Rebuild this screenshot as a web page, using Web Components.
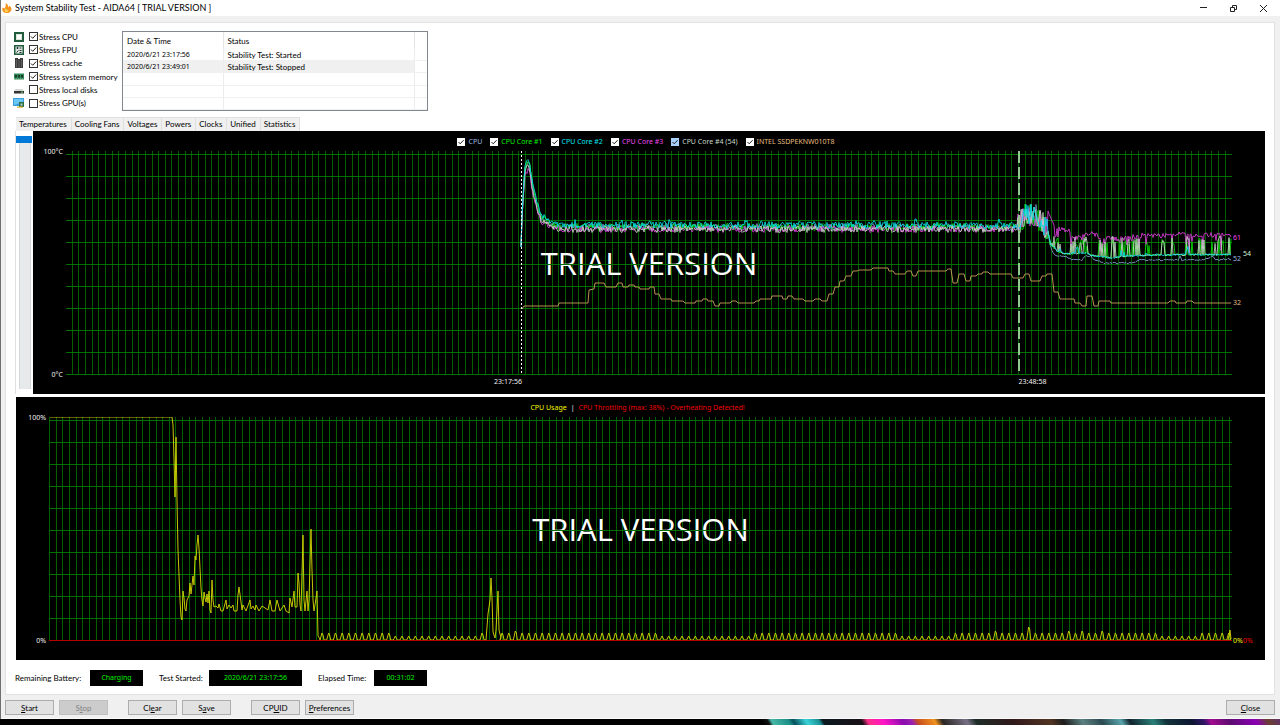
<!DOCTYPE html>
<html lang="en">
<head>
<meta charset="utf-8">
<title>System Stability Test - AIDA64</title>
<style>
html, body { margin: 0; min-height: 100%; background: #050505; }
body { font: 8px/12px Lato, "Noto Sans", sans-serif; color: #000; }
</style>
</head>
<body>
<stability-app></stability-app>

<script>
const define = (name, html, setup) => {
  const tpl = document.createElement('template');
  tpl.innerHTML = html;
  customElements.define(name, class extends HTMLElement {
    constructor() {
      super();
      this.attachShadow({ mode: 'open' }).append(tpl.content.cloneNode(true));
    }
    connectedCallback() { if (setup) setup(this, this.shadowRoot); }
  });
};

/* ---------- small controls ---------- */
define('push-button', `
<style>
:host { display: block; width: 49px; }
button { box-sizing: border-box; width: 100%; height: 15px; padding: 0; font: inherit; line-height: 12px;
  color: #000; background: #e1e1e1; border: 1px solid #adadad; white-space: nowrap; display: block; }
button:disabled { background: #ccc; border-color: #bfbfbf; color: #838383; }
</style>
<button type="button"><slot></slot></button>`, (el, root) => {
  root.querySelector('button').disabled = el.hasAttribute('disabled');
});

define('stress-option', `
<style>
:host { display: block; }
label { display: grid; grid-template-columns: 16px 9px auto; align-items: center; height: 100%; white-space: nowrap; }
::slotted(svg) { display: block; width: 12px; height: 12px; }
input { appearance: none; margin: 0; width: 9px; height: 9px; box-sizing: border-box; border: 1px solid #333; background: #fff; }
input:checked { background: #fff url("data:image/svg+xml,%3Csvg xmlns='http://www.w3.org/2000/svg' viewBox='0 0 7 7'%3E%3Cpath d='M1 3.5 2.7 5.3 6.2 1.5' fill='none' stroke='%23222'/%3E%3C/svg%3E"); }
span { padding-left: 1px; }
</style>
<label><slot name="icon"></slot><input type="checkbox"><span><slot></slot></span></label>`, (el, root) => {
  root.querySelector('input').checked = el.hasAttribute('checked');
});

define('legend-item', `
<style>
:host { display: block; white-space: nowrap; }
label { display: flex; align-items: center; gap: 3px; }
input { appearance: none; margin: 0; width: 8px; height: 8px; background: var(--box, #fff)
  url("data:image/svg+xml,%3Csvg xmlns='http://www.w3.org/2000/svg' viewBox='0 0 8 8'%3E%3Cpath d='M1.5 4 3.2 5.8 6.6 2.2' fill='none' stroke='%23222'/%3E%3C/svg%3E"); }
</style>
<label><input type="checkbox" checked><span><slot></slot></span></label>`);

define('read-out', `
<style>
:host { display: flex; align-items: center; }
label { white-space: nowrap; width: var(--label); }
output { display: block; width: var(--box); font: 7px/16px "Noto Sans", sans-serif; text-align: center; background: #000; color: #00f000; }
</style>
<label for="o"><slot name="label"></slot></label><output id="o"><slot></slot></output>`);

/* ---------- title bar ---------- */
define('title-bar', `
<style>
:host { display: flex; align-items: center; height: 16px; padding-right: 2px; background: #fff; }
.logo { width: 12px; height: 12px; margin: 0 2px 0 0; }
h1 { margin: 0; font: inherit; font-size: 9px; flex: 1; white-space: nowrap; }
button { width: 30px; height: 14px; padding: 0; border: 0; background: none; display: grid; place-items: center; }
button svg { width: 9px; height: 9px; fill: none; stroke: #222; }
</style>
<svg class="logo" viewBox="0 0 12 12"><path d="M4.5 1C7 2 7.500 4 7 5.500L8.500 3.800C11 6 11 8 9.500 9.500 8 11.500 4 11.500 2.300 9.700 1 8.500 1 7 1.800 5.500L3.500 6.500C5 4.500 5 3 4.500 1Z" fill="#f7941e"/><path d="M3.500 7.500 5 6.500 6.500 8.500 7.500 7.500 7 10 4 10Z" fill="#ffcf5a"/></svg>
<h1><slot></slot></h1>
<button type="button" aria-label="Minimize"><svg viewBox="0 0 9 9"><path d="M1 3.500H8"/></svg></button>
<button type="button" aria-label="Restore"><svg viewBox="0 0 9 9"><path d="M1.500 3.500h4v4h-4zM3.500 3.500v-2h4v4h-2"/></svg></button>
<button type="button" aria-label="Close"><svg viewBox="0 0 9 9"><path d="M1 1 8 8M8 1 1 8"/></svg></button>`);

/* ---------- event log ---------- */
define('event-log', `
<style>
:host { display: block; box-sizing: border-box; border: 1px solid #828790; background: #fff; }
table { width: 100%; height: 100%; border-collapse: collapse; table-layout: fixed; }
th, td { padding: 0 0 0 4px; text-align: left; font-weight: 400; white-space: nowrap; line-height: 10px; border-right: 1px solid #ececec; }
th:last-child, td:last-child { border-right: 0; }
th { height: 17px; border-color: #e5e5e5; }
td { border-bottom: 1px solid #f0f0f0; height: 11px; }
td:first-child { font: 7px/10px "Noto Sans", sans-serif; }
tr.sel td:not(:last-child) { background: #f0f0f0; }
.a { width: 100px; } .b { width: 191px; }
</style>
<table>
<colgroup><col class="a"><col class="b"><col></colgroup>
<thead><tr><th>Date &amp; Time</th><th>Status</th><th></th></tr></thead>
<tbody>
<tr><td>2020/6/21 23:17:56</td><td>Stability Test: Started</td><td></td></tr>
<tr class="sel"><td>2020/6/21 23:49:01</td><td>Stability Test: Stopped</td><td></td></tr>
<tr><td></td><td></td><td></td></tr><tr><td></td><td></td><td></td></tr><tr><td></td><td></td><td></td></tr>
</tbody></table>`);

/* ---------- tabs ---------- */
define('tab-strip', `
<style>
:host { display: flex; align-items: flex-end; height: 16px; }
button { box-sizing: border-box; font: inherit; line-height: 10px; height: 14px; padding: 0 4px 2px 3px; color: #000; background: #f0f0f0;
  border: 1px solid #e0e0e0; border-width: 1px 1px 0 0; white-space: nowrap; }
button:first-child { height: 16px; background: #fff; border-left-width: 1px; padding: 0 4px 3px; }
</style>
<button type="button">Temperatures</button><button type="button">Cooling Fans</button><button type="button">Voltages</button><button type="button">Powers</button><button type="button">Clocks</button><button type="button">Unified</button><button type="button">Statistics</button>`);

/* ---------- chart ---------- */
function seeded(seed) {
  return () => {
    seed = (seed * 1664525 + 1013904223) >>> 0;
    return seed / 4294967296;
  };
}
const at = (keys, x) => {
  for (let i = 1; i < keys.length; i++) {
    const [x0, y0] = keys[i - 1], [x1, y1] = keys[i];
    if (x <= x1) return y0 + (y1 - y0) * (x - x0) / (x1 - x0);
  }
  return keys[keys.length - 1][1];
};
const pts = list => list.map(p => p.join(',')).join(' ');
const pairs = text => text.trim().split(/\s+/).map(p => p.split(',').map(Number));

const HEAT = pairs('521,246 522,215 524,180 525,166 528,162 530,166 532,182 535,196 538,207 541,217 545,219 550,223 558,227');
const CLUSTERS = pairs('1050,1060 1071,1087 1098,1107 1112,1115 1120,1130 1132,1139 1146,1149 1161,1164 1172,1174 1186,1192 1199,1204 1212,1223 1229,1231');

function coreSeries(seed, base, peak, tail, chance, burst, jitter = 1.6) {
  const rnd = seeded(seed), out = [];
  for (let x = 521; x <= 1231; x += 1) {
    let y;
    if (x < 558) y = at(HEAT, x) + (x > 523 ? (base - 227) + peak * Math.max(0, (558 - x) / 35) : 2) + (rnd() - 0.5) * 5;
    else if (x < 1018) y = base + (rnd() - 0.5) * 7 - (base < 226 && rnd() > 0.95 ? 3 : 0);
    else if (x < 1048) y = at([[1018, 224], [1026, 213], [1036, 216], [1048, 230]], x) + (rnd() - 0.5) * 24;
    else {
      y = at(tail, x) + (rnd() - 0.5) * jitter;
      const busy = CLUSTERS.some(c => x >= c[0] && x <= c[1]);
      if (busy && rnd() < chance) y = burst(rnd());
    }
    out.push([x, Math.round(y * 2) / 2]);
  }
  return pts(out);
}

const low = pairs('1048,232 1051,245 1057,251 1065,254 1085,253 1095,256 1112,258 1128,256 1150,255 1231,254.5');
const high = pairs('1048,213 1052,220 1057,229 1068,230 1075,238 1085,235 1092,234 1100,237 1120,239 1145,235 1160,236 1180,234 1231,235');
const cpuTail = pairs('1048,232 1050,245 1053,253 1058,256 1066,257 1074,260 1082,260 1085,256 1091,256 1094,260 1100,261 1103,263 1134,263 1138,260 1178,260 1180,256 1182,260 1190,260 1204,260 1212,256 1216,260 1231,259');
const ssd = '522,309 524,306 558,306 559,303 588,303 589,290 594,289 595,283 604,283 606,287 616,287 618,283 622,283 623,287 628,287 629,285 634,285 635,287 639,287 640,289 649,289 650,287 654,287 655,294 659,294 661,299 671,299 672,301 683,301 685,303 695,303 696,301 702,301 703,299 707,299 708,301 713,301 715,306 719,306 720,303 730,303 732,301 736,301 738,303 754,303 756,301 759,301 760,299 771,299 772,296 782,296 783,299 787,299 788,296 792,296 794,299 803,299 805,301 813,301 815,299 820,299 822,301 827,301 829,294 833,294 835,287 839,287 840,281 844,281 846,276 851,276 853,271 857,271 859,270 871,270 873,268 888,268 889,271 893,271 895,274 905,274 907,271 911,271 913,276 916,276 918,271 946,271 948,269 951,269 953,283 957,283 959,274 964,274 966,281 970,281 971,276 976,276 978,274 982,274 983,272 988,272 990,274 1011,274 1013,278 1023,278 1025,274 1029,274 1031,281 1040,281 1042,276 1046,276 1047,274 1052,274 1054,292 1058,292 1060,299 1074,299 1075,303 1080,303 1082,306 1086,306 1087,296 1092,296 1094,306 1098,306 1099,301 1110,301 1111,303 1168,303 1170,301 1175,301 1176,303 1186,303 1187,301 1192,301 1194,303 1231,303';

function usageSeries() {
  const out = pairs('50,417 172,417 173,425 174,459 175,497 176,437 177,500 178,550 179,575 180,600 181,617 182,620 183,591 184,598 185,609 186,611 187,600 189,596 190,583 191,594 193,576 194,585 195,556 196,560 197,545 198,535 199,548 200,568 201,588 202,600 203,606 204,592 205,598 206,602 207,594 208,603 209,591 210,610 211,613 212,580 213,600 214,607 216,606 218,608 219,604 221,611 223,611 226,600 227,609 229,605 231,608 233,605 234,611 237,611 238,595 239,587 241,602 242,610 243,605 246,611 250,600 251,609 253,606 255,610 256,605 259,611 262,606 268,610 270,600 272,611 275,611 277,600 280,611 284,605 286,611 289,613 290,598 292,607 294,591 295,607 297,607 298,573 299,583 300,605 301,611 303,535 304,600 305,611 307,591 308,611 309,600 311,529 312,570 313,600 314,611 315,605 317,591 318,636 320,639');
  const rnd = seeded(17);
  for (let k = 0; k < 137; k++) {
    const x = 322 + k * 20 / 3;
    if (x > 486 && x < 502) {
      if (x < 492) out.push(...pairs('486,640 488,614 490,600 491,578 492,598 493,632 495,638 496,630 498,591 499,630 501,638'));
      continue;
    }
    const small = (x > 395 && x < 482) || (x > 660 && x < 750) || (x > 900 && x < 955) || (x > 1160 && x < 1200);
    const top = Math.abs(x - 1030) < 3.4 ? 627 : small ? 636 : rnd() > 0.85 ? 631 : 633;
    out.push([x - 2, 640], [x, top], [x + 1, top + 2], [x + 2, 640]);
  }
  out.push([1228, 640], [1230, 630], [1231, 639]);
  return pts(out);
}

const PLOTS = {
  temperature: {
    box: [66, 151, 1166, 224], first: 72, rules: 154,
    series: () => [
      ['#7f9fd0', coreSeries(5, 227, 2, cpuTail, 0, () => 260)],
      ['#00e000', coreSeries(11, 227, 0, low, .55, r => 238 + r * 8)],
      ['#e040e0', coreSeries(29, 229, 7, high, .3, r => 236 + r * 20, 5)],
      ['#c8d8c8', coreSeries(41, 229, 3, low, .5, r => 236 + r * 8)],
      ['#00e0e8', coreSeries(53, 225, 1, low, .2, r => 246 + r * 8)],
      ['#d8a860', ssd]
    ],
    extra: `<line class="dots" x1="521.5" x2="521.5" y1="151" y2="374"/><line class="dash" x1="1019" x2="1019" y1="151" y2="374"/>`
  },
  usage: {
    box: [49, 417, 1183, 224], first: 56, rules: 420, edge: 49,
    series: () => [['#e8e800', usageSeries()]],
    extra: `<line class="zero" x1="49" x2="1232" y1="640.5" y2="640.5"/>`
  }
};

define('time-chart', `
<style>
:host { display: grid; box-sizing: border-box; background: #000; color: #f0f0f0; overflow: hidden;
  font: 7px/12px "Noto Sans", "Open Sans", sans-serif;
  grid-template: 20px minmax(224px, 1fr) 19px / 33px minmax(0, 1fr) 33px; }
.legend { grid-area: 1 / 1 / 2 / 4; display: flex; justify-content: center; align-items: center; gap: var(--gap, 8px); padding: 1px 6px 0 0; white-space: nowrap; }
.axis { grid-area: 2 / 1; display: flex; flex-direction: column; justify-content: space-between; align-items: flex-end;
  margin: -5px 0 -6px; padding-right: 3px; }
.grid, .data { grid-area: 2 / 2; width: 100%; height: 100%; display: block; }
.mark { grid-area: 1 / 1 / 4 / 4; place-self: center; font: 31px/40px "Open Sans", sans-serif; color: #fff; white-space: nowrap; }
.now { grid-area: 2 / 3; position: relative; line-height: 10px; }
.foot { grid-area: 3 / 2; display: grid; grid-template-columns: 391fr 426fr 183fr; padding-top: 1px; }
line, polyline { fill: none; vector-effect: non-scaling-stroke; }
.v { stroke: #006000; } .h { stroke: #007000; }
.dots { stroke: #fff; stroke-dasharray: 2 2; }
.dash { stroke: #90c890; stroke-width: 2; stroke-dasharray: 12 4; }
.zero { stroke: #b80000; }
polyline { opacity: .85; }
</style>
<svg class="grid" preserveAspectRatio="none"></svg>
<div class="mark">TRIAL VERSION</div>
<svg class="data" preserveAspectRatio="none"></svg>
<div class="legend"><slot name="legend"></slot></div>
<div class="axis"><slot name="axis"></slot></div>
<div class="now"><slot name="now"></slot></div>
<div class="foot"><slot name="foot"></slot></div>`, (el, root) => {
  const plot = PLOTS[el.getAttribute('plot')];
  const [x, y, w, h] = plot.box;
  let v = '', rules = '';
  const verticals = plot.edge ? [plot.edge] : [];
  for (let gx = plot.first; gx < x + w; gx += 20 / 3) verticals.push(Math.floor(gx));
  for (const gx of verticals) v += `<line class="v" x1="${gx + .5}" x2="${gx + .5}" y1="${y}" y2="${y + h}"/>`;
  for (let i = 0; i <= 10; i++) rules += `<line class="h" x1="${x}" x2="${x + w}" y1="${plot.rules + i * 22 + .5}" y2="${plot.rules + i * 22 + .5}"/>`;
  const grid = root.querySelector('.grid'), data = root.querySelector('.data');
  for (const s of [grid, data]) s.setAttribute('viewBox', `${x} ${y} ${w} ${h}`);
  grid.innerHTML = v;
  data.innerHTML = rules + plot.series().map(([c, p]) => `<polyline stroke="${c}" points="${p}"/>`).join('') + plot.extra;
});

/* ---------- whole window ---------- */
define('stability-app', `
<style>
:host { display: flex; flex-direction: column; min-height: 100vh; }
.window { flex: 1; display: flex; flex-direction: column; background: #f0f0f0; border-left: 1px solid #707070; }
.panel { flex: 1; display: flex; flex-direction: column; margin: 6px 5px 0 4px; padding: 8px 9px 8px; background: #fff; border: 1px solid #e2e2e2; }
.setup { display: flex; height: 80px; }
.options { display: grid; grid-template-rows: repeat(6, 1fr); width: 109px; margin: -1px 0 1px -2px; height: 80px; }
event-log { width: 306px; }
tab-strip { margin: 4px 0 0 1px; }
.temps { display: grid; grid-template-columns: 17px minmax(0, 1fr); flex: 263 1 auto; border-left: 1px solid #e0e0e0; margin-bottom: 3px; }
.temps input { appearance: none; writing-mode: vertical-lr; width: 16px; height: auto; min-height: 0; margin: 5px 0 5px; align-self: stretch; background: linear-gradient(90deg, #fff 3px, #d3d7d8 3px 4px, #e6eaea 4px 14px, #d3d7d8 14px 15px, #fff 15px); }
.temps input::-webkit-slider-thumb { appearance: none; width: 16px; height: 7px; background: #0078d7; }
.usage { flex: 263 1 auto; margin-left: 1px; --gap: 4px; }
.status { display: flex; gap: 16px; margin-top: 10px; height: 16px; }
.status read-out:nth-child(1) { --label: 75px; --box: 53px; }
.status read-out:nth-child(2) { --label: 50px; --box: 93px; }
.status read-out:nth-child(3) { --label: 56px; --box: 53px; }
.actions { display: flex; gap: 5px; padding: 5px 5px 3px 4px; border-bottom: 1px solid #fafafa; }
.actions .next { margin-left: 15px; }
.actions .end { margin-left: auto; }
.desk { height: 6px; background: linear-gradient(60deg, #000 59.500%, #111 60%, #46b7a6 60.300%, #1c8f88 61.600%, #07515c 62%, #39d3d8 63%, #1b8f92 64%, #0b1a20 64.300%, #181016 67.300%, #ff2f8a 67.800%, #ff14c8 69%, #8a0cae 70.500%, #9a22b0 71.200%, #c8501c 71.700%, #f0921e 73%, #2a2622 73.600%, #777086 75.500%, #1e2c28 76.200%, #30181a 79%, #523422 82%, #1d1d1c 83%, #5c8080 84.500%, #2b4a52 86%, #5aa4ac 87.500%, #12242e 88.200%, #2a7f78 90%, #12333a 91%, #0c1630 93%, #35156a 94%, #a00c8e 94.500%, #5c0c70 96%, #8a00b4 98%, #6a4030 99%, #60306a 100%); }
.now { position: absolute; left: 1px; margin-top: -5px; }
.now.next { left: 11px; }
</style>
<div class="window">
  <title-bar>System Stability Test - AIDA64 [ TRIAL VERSION ]</title-bar>
  <div class="panel">
    <div class="setup">
      <div class="options">
        <stress-option checked><svg slot="icon" viewBox="0 0 12 12"><path d="M1 1h10v10H1z" fill="#1f5b3c"/><path d="M3 3h6v6H3z" fill="#dfe6dc"/><path d="M4 4h4v4H4z" fill="#fff"/></svg>Stress CPU</stress-option>
        <stress-option checked><svg slot="icon" viewBox="0 0 12 12"><path d="M1 1h10v10H1z" fill="#1f5b3c"/><path d="M2.500 2.500h7v7h-7z" fill="#dfe6dc"/><path d="M3.500 4h2M4.500 3v2M6.500 4h2M3.500 8.500l2-2M6.500 6.500h2M6.500 8.500h2" stroke="#234" fill="none"/></svg>Stress FPU</stress-option>
        <stress-option checked><svg slot="icon" viewBox="0 0 12 12"><path d="M2 1h3v1h2V1h3v10H2z" fill="#3c3c3c"/><path d="M3.500 2.500v8M6 3v7.500M8.500 2.500v8" stroke="#777" stroke-width=".6"/></svg>Stress cache</stress-option>
        <stress-option checked><svg slot="icon" viewBox="0 0 12 12"><path d="M1 2.500h10v6H1z" fill="#2f8a58"/><path d="M2 4h2v2.500H2zM5 4h2v2.500H5zM8 4h2v2.500H8z" fill="#173a2a"/><path d="M1 8h10" stroke="#9fc4a0" stroke-dasharray="1 1"/></svg>Stress system memory</stress-option>
        <stress-option><svg slot="icon" viewBox="0 0 12 12"><path d="M2.500 5h7l1.500 2H1z" fill="#d8d8d8"/><path d="M1 7h10v2.500H1z" fill="#333"/><path d="M8 8.200h2" stroke="#6d6"/></svg>Stress local disks</stress-option>
        <stress-option><svg slot="icon" viewBox="0 0 12 12"><path d="M0 1h11v8H0z" fill="#3a9fe0"/><path d="M1 2h9v3L1 8z" fill="#6cc6f5"/><path d="M6 5h5v5H6z" fill="#2a7043"/><path d="M7.500 6.500h2v2h-2z" fill="#bcd"/><path d="M4 9.500h6v1.200H4z" fill="#e0b030"/></svg>Stress GPU(s)</stress-option>
      </div>
      <event-log></event-log>
    </div>
    <tab-strip></tab-strip>
    <div class="temps">
      <input type="range" min="0" max="100" value="0" aria-label="Scroll sensors">
      <time-chart plot="temperature">
        <legend-item slot="legend" style="color:#9fb8e0">CPU</legend-item>
        <legend-item slot="legend" style="color:#00f000">CPU Core #1</legend-item>
        <legend-item slot="legend" style="color:#00e8f0">CPU Core #2</legend-item>
        <legend-item slot="legend" style="color:#f048f0">CPU Core #3</legend-item>
        <legend-item slot="legend" style="color:#c8d8c8;--box:#a8d0f8">CPU Core #4 (54)</legend-item>
        <legend-item slot="legend" style="color:#e8bc80">INTEL SSDPEKNW010T8</legend-item>
        <span slot="axis">100°C</span><span slot="axis">0°C</span>
        <span slot="now" class="now" style="top:39%;color:#f048f0">61</span>
        <span slot="now" class="now" style="top:48%;color:#9fb8e0">52</span>
        <span slot="now" class="now next" style="top:46%;color:#d8f0d8">54</span>
        <span slot="now" class="now" style="top:68%;color:#e8bc80">32</span>
        <span slot="foot" style="justify-self:end">23:17:56</span><span slot="foot"></span><span slot="foot">23:48:58</span>
      </time-chart>
    </div>
    <time-chart class="usage" plot="usage">
      <span slot="legend" style="color:#f8f800">CPU Usage</span><span slot="legend">|</span><span slot="legend" style="color:#f00000">CPU Throttling (max: 38%) - Overheating Detected!</span>
      <span slot="axis">100%</span><span slot="axis">0%</span>
      <span slot="now" class="now" style="top:100%;color:#f8f800">0%</span>
      <span slot="now" class="now next" style="top:100%;color:#f00000">0%</span>
    </time-chart>
    <div class="status">
      <read-out><span slot="label">Remaining Battery:</span>Charging</read-out>
      <read-out><span slot="label">Test Started:</span>2020/6/21 23:17:56</read-out>
      <read-out><span slot="label">Elapsed Time:</span>00:31:02</read-out>
    </div>
  </div>
  <div class="actions">
    <push-button><u>S</u>tart</push-button>
    <push-button disabled>S<u>t</u>op</push-button>
    <push-button class="next">Cl<u>e</u>ar</push-button>
    <push-button>S<u>a</u>ve</push-button>
    <push-button class="next">CP<u>U</u>ID</push-button>
    <push-button><u>P</u>references</push-button>
    <push-button class="end"><u>C</u>lose</push-button>
  </div>
</div>
<div class="desk"></div>`);
</script>
</body>
</html>
